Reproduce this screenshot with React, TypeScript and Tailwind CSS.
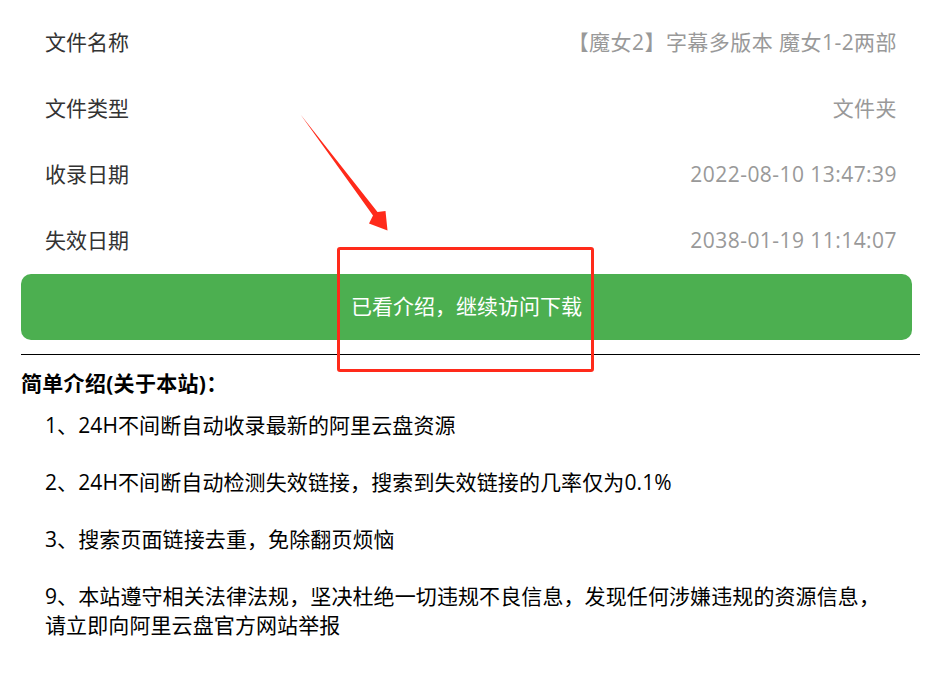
import React from 'react';

const INFO = [
  { label: '文件名称', value: '【魔女2】字幕多版本 魔女1-2两部' },
  { label: '文件类型', value: '文件夹' },
  { label: '收录日期', value: '2022-08-10 13:47:39' },
  { label: '失效日期', value: '2038-01-19 11:14:07' },
];

const FEATURES = [
  '1、24H不间断自动收录最新的阿里云盘资源',
  '2、24H不间断自动检测失效链接，搜索到失效链接的几率仅为0.1%',
  '3、搜索页面链接去重，免除翻页烦恼',
  '9、本站遵守相关法律法规，坚决杜绝一切违规不良信息，发现任何涉嫌违规的资源信息，请立即向阿里云盘官方网站举报',
];

export default function App() {
  return (
    <div
      className="relative min-h-[684px] bg-white pl-[21px] pr-[26px] pt-[10px] text-[21px]"
      style={{ fontFamily: '"Open Sans", "Noto Sans CJK SC", sans-serif' }}
    >
      {/* file info table */}
      <div>
        {INFO.map((row) => (
          <div key={row.label} className="flex h-[66px] items-center justify-between pl-[24px] pr-[23px]">
            <span className="text-[#333]">{row.label}</span>
            <span className="tracking-[0.45px] text-[#999]">{row.value}</span>
          </div>
        ))}
      </div>

      <button className="mr-[8px] flex h-[66px] w-[891px] items-center justify-center rounded-[10px] bg-[#4caf50] text-white">
        已看介绍，继续访问下载
      </button>

      <hr className="mt-[14px] border-t border-black" />

      <h3 className="mt-[12px] text-[21px] font-bold leading-[32px] tracking-[0.3px] text-black">简单介绍(关于本站)：</h3>

      <div className="mt-[12px] space-y-[28px] pl-[24px] pr-[40px] leading-[29px] tracking-[0.1px] text-black">
        {FEATURES.map((f) => (
          <p key={f}>{f}</p>
        ))}
      </div>

      {/* annotation: arrow + box */}
      <svg className="pointer-events-none absolute left-0 top-0" width="946" height="684">
        <polygon
          points="300.5,114.5 377.5,212 385.5,211 387.5,230.5 369,223.5 373,215.5"
          fill="#ff2a1a"
        />
      </svg>
      <div className="pointer-events-none absolute left-[337px] top-[247px] h-[125px] w-[257px] rounded-[3px] border-[3px] border-[#ff2a1a]" />
    </div>
  );
}
